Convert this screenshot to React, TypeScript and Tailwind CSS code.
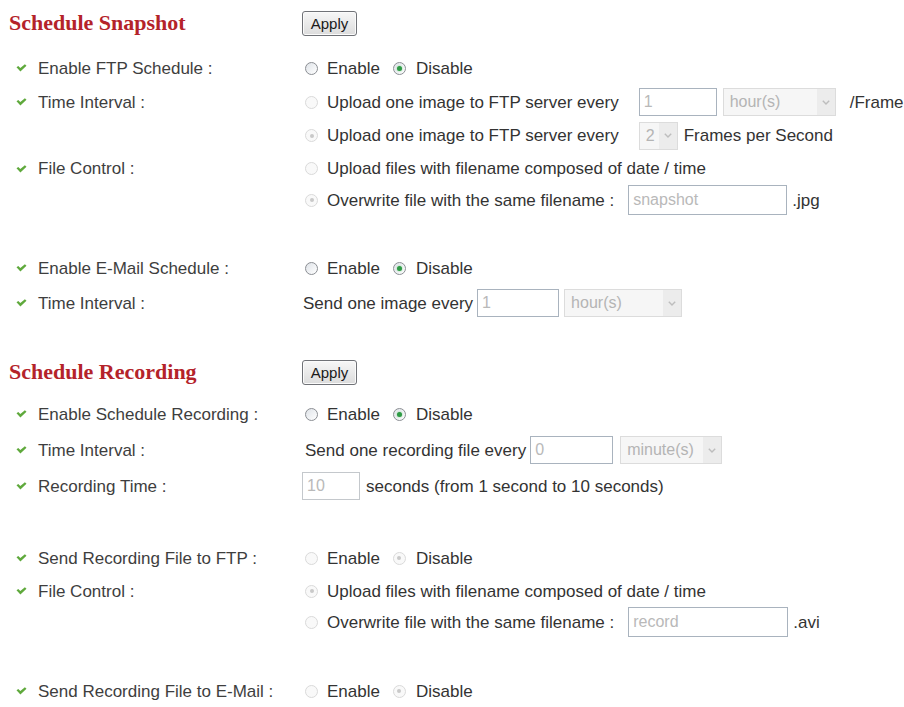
import React from "react"

function Check() {
  return (
    <svg width="11" height="8" viewBox="0 0 11 8" className="shrink-0">
      <path d="M0.5 3.3 L2.3 2 L4.3 4.1 L8.9 0.3 L10.5 1.7 L4.4 7.5 Z" fill="#5fa93c" />
    </svg>
  )
}

function Radio({ on, off, className }: { on?: boolean; off?: boolean; className?: string }) {
  if (off) {
    return (
      <span className={"inline-flex h-[13px] w-[13px] shrink-0 items-center justify-center rounded-full border border-[#dadada] bg-[#f9f9f9] " + (className ?? "")}>
        {on && <span className="h-[4px] w-[4px] rounded-full bg-[#c9c9c9]" />}
      </span>
    )
  }
  return (
    <span className={"inline-flex h-[13px] w-[13px] shrink-0 items-center justify-center rounded-full border border-[#8b8e93] bg-gradient-to-br from-[#dfe3e8] to-[#ffffff] " + (className ?? "")}>
      {on && <span className="h-[5px] w-[5px] rounded-full bg-[#2e9a45] shadow-[0_0_2px_#7fcf8c]" />}
    </span>
  )
}

function TextBox({ value, className }: { value: string; className: string }) {
  return (
    <span className={"flex shrink-0 items-center border border-[#a9b3be] bg-white pl-[4px] text-[16px] text-[#b9b9b9] " + className}>
      {value}
    </span>
  )
}

function Select({ value, className }: { value: string; className: string }) {
  return (
    <span className={"flex shrink-0 items-center justify-between border border-[#dcdcdc] bg-[#f6f6f6] pl-[6px] text-[16px] text-[#b4b4b4] " + className}>
      <span>{value}</span>
      <span className="flex h-full w-[18px] items-center justify-center bg-[#ececec]">
        <svg width="8" height="5" viewBox="0 0 8 5">
          <path d="M0.8 0.8 L4 4 L7.2 0.8" fill="none" stroke="#bdbdbd" strokeWidth="1.4" />
        </svg>
      </span>
    </span>
  )
}

function Label({ text }: { text: string }) {
  return (
    <div className="flex items-center gap-[11px] pl-[16px] text-[#3e3e3e] whitespace-nowrap">
      <Check />
      <span>{text}</span>
    </div>
  )
}

function Row({ label, className, children }: { label?: string; className: string; children: React.ReactNode }) {
  return (
    <div className={"grid grid-cols-[300px_1fr] items-center " + className}>
      {label ? <Label text={label} /> : <div />}
      <div className="flex items-center whitespace-nowrap">{children}</div>
    </div>
  )
}

function Heading({ title, className }: { title: string; className: string }) {
  return (
    <div className={"grid grid-cols-[300px_1fr] items-center " + className}>
      <h2 className="pl-[9px] font-['Liberation_Serif','Times_New_Roman',serif] text-[22px] font-bold text-[#b4232a]">
        {title}
      </h2>
      <div>
        <button className="ml-[2px] h-[25px] w-[55px] rounded-[3px] border border-[#707277] bg-gradient-to-b from-[#f7f7f7] to-[#dcdcdc] text-[15px] text-[#1a1a1a] shadow-[inset_0_0_0_1px_#fbfbfb]">
          Apply
        </button>
      </div>
    </div>
  )
}

function OnOff({ off }: { off?: boolean }) {
  return (
    <>
      <Radio off={off} className="ml-[5px]" />
      <span className="ml-[9px]">Enable</span>
      <Radio on off={off} className="ml-[13px]" />
      <span className="ml-[10px]">Disable</span>
    </>
  )
}

export default function App() {
  return (
    <div className="h-[707px] w-[904px] overflow-hidden bg-white pt-[7px] font-['Liberation_Sans',Arial,sans-serif] text-[17px] leading-none text-[#333]">
      <Heading title="Schedule Snapshot" className="h-[32px]" />

      <Row label="Enable FTP Schedule :" className="mt-[12px] h-[34px]">
        <OnOff />
      </Row>
      <Row label="Time Interval :" className="h-[34px]">
        <Radio off className="ml-[5px]" />
        <span className="ml-[9px]">Upload one image to FTP server every</span>
        <TextBox value="1" className="ml-[20px] h-[28px] w-[78px]" />
        <Select value="hour(s)" className="ml-[6px] h-[28px] w-[113px]" />
        <span className="ml-[14px]">/Frame</span>
      </Row>
      <Row className="h-[33px]">
        <Radio on off className="ml-[5px]" />
        <span className="ml-[9px]">Upload one image to FTP server every</span>
        <Select value="2" className="ml-[20px] h-[28px] w-[39px]" />
        <span className="ml-[6px]">Frames per Second</span>
      </Row>
      <Row label="File Control :" className="h-[33px]">
        <Radio off className="ml-[5px]" />
        <span className="ml-[9px]">Upload files with filename composed of date / time</span>
      </Row>
      <Row className="h-[28px]">
        <Radio on off className="ml-[5px]" />
        <span className="ml-[9px]">Overwrite file with the same filename :</span>
        <TextBox value="snapshot" className="ml-[14px] h-[30px] w-[159px]" />
        <span className="ml-[5px]">.jpg</span>
      </Row>

      <Row label="Enable E-Mail Schedule :" className="mt-[38px] h-[34px]">
        <OnOff />
      </Row>
      <Row label="Time Interval :" className="h-[36px]">
        <span className="ml-[3px]">Send one image every</span>
        <TextBox value="1" className="ml-[4px] h-[28px] w-[82px]" />
        <Select value="hour(s)" className="ml-[5px] h-[28px] w-[118px]" />
      </Row>

      <Heading title="Schedule Recording" className="mt-[35px] h-[32px]" />

      <Row label="Enable Schedule Recording :" className="mt-[8px] h-[36px]">
        <OnOff />
      </Row>
      <Row label="Time Interval :" className="h-[36px]">
        <span className="ml-[5px]">Send one recording file every</span>
        <TextBox value="0" className="ml-[4px] h-[28px] w-[83px]" />
        <Select value="minute(s)" className="ml-[7px] h-[28px] w-[102px]" />
      </Row>
      <Row label="Recording Time :" className="h-[36px]">
        <TextBox value="10" className="ml-[2px] h-[28px] w-[58px] border-[#c4c8cc]" />
        <span className="ml-[6px]">seconds (from 1 second to 10 seconds)</span>
      </Row>

      <Row label="Send Recording File to FTP :" className="mt-[37px] h-[34px]">
        <OnOff off />
      </Row>
      <Row label="File Control :" className="h-[32px]">
        <Radio on off className="ml-[5px]" />
        <span className="ml-[9px]">Upload files with filename composed of date / time</span>
      </Row>
      <Row className="h-[30px]">
        <Radio off className="ml-[5px]" />
        <span className="ml-[9px]">Overwrite file with the same filename :</span>
        <TextBox value="record" className="ml-[14px] h-[30px] w-[160px]" />
        <span className="ml-[5px]">.avi</span>
      </Row>

      <Row label="Send Recording File to E-Mail :" className="mt-[37px] h-[34px]">
        <OnOff off />
      </Row>
    </div>
  )
}
